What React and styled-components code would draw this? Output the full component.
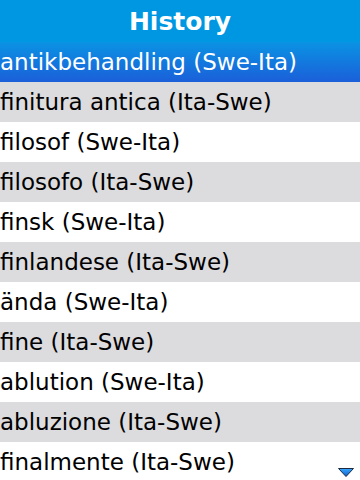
import React from "react";
import styled, { createGlobalStyle } from "styled-components";

const Global = createGlobalStyle`
  html, body { margin: 0; padding: 0; background: #fff; }
  body { font-family: "DejaVu Sans", sans-serif; overflow: hidden; }
`;

const Screen = styled.div`
  width: 360px;
  height: 480px;
  overflow: hidden;
  position: relative;
  display: flex;
  flex-direction: column;
  background: #fff;
`;

const Header = styled.div`
  height: 42px;
  flex: none;
  background: #0097e2;
  color: #fff;
  font-weight: bold;
  font-size: 25px;
  display: flex;
  align-items: center;
  justify-content: center;
`;

const List = styled.div`
  display: flex;
  flex-direction: column;
`;

const Row = styled.div`
  height: 40px;
  flex: none;
  display: flex;
  align-items: center;
  padding-left: 0;
  font-size: 23px;
  white-space: nowrap;
  color: ${(p) => (p.$selected ? "#fff" : "#000")};
  background: ${(p) =>
    p.$selected
      ? "linear-gradient(#0a93e4, #1b5fd9)"
      : p.$alt
      ? "#dcdbdd"
      : "#fff"};
`;

const Arrow = styled.svg`
  position: absolute;
  right: 6px;
  bottom: 3px;
`;

const items = [
  "antikbehandling (Swe-Ita)",
  "finitura antica (Ita-Swe)",
  "filosof (Swe-Ita)",
  "filosofo (Ita-Swe)",
  "finsk (Swe-Ita)",
  "finlandese (Ita-Swe)",
  "ända (Swe-Ita)",
  "fine (Ita-Swe)",
  "ablution (Swe-Ita)",
  "abluzione (Ita-Swe)",
  "finalmente (Ita-Swe)",
];

export default function App() {
  return (
    <Screen>
      <Global />
      <Header>History</Header>
      <List>
        {items.map((t, i) => (
          <Row key={i} $selected={i === 0} $alt={i % 2 === 1}>
            {t}
          </Row>
        ))}
      </List>
      <Arrow width="16" height="9" viewBox="0 0 16 9">
        <defs>
          <linearGradient id="ag" x1="0" y1="0" x2="0" y2="1">
            <stop offset="0" stopColor="#3aa8ff" />
            <stop offset="1" stopColor="#0a5fd0" />
          </linearGradient>
        </defs>
        <path d="M0.5 0.5 H15.5 L8 8.5 Z" fill="url(#ag)" stroke="#1a2a40" strokeWidth="1" />
      </Arrow>
    </Screen>
  );
}
